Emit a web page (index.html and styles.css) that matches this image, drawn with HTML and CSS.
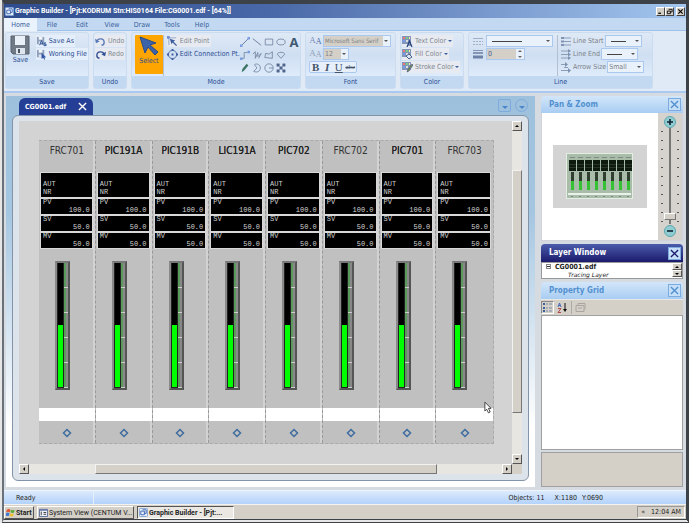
FILE: index.html
```
<!DOCTYPE html>
<html lang="en">
<head>
<meta charset="utf-8">
<title>Graphic Builder</title>
<link rel="stylesheet" href="styles.css">
</head>
<body>
<svg class="defs" aria-hidden="true">
  <symbol id="i-app" viewBox="0 0 10 10"><rect x=".5" y=".5" width="9" height="9" rx="1" fill="#e4eefb" stroke="#7da0d4"/><path d="M2 3.5h4v4H2zM4 2h4v4H6" fill="none" stroke="#3b62ae"/></symbol>
  <symbol id="i-close" viewBox="0 0 10 10"><path d="M1 1l8 8M9 1l-8 8" fill="none" stroke="currentColor" stroke-width="1.5"/></symbol>
  <symbol id="i-doc" viewBox="0 0 12 12"><path d="M1 1h8v8H1z" fill="#8fa0bb"/><path d="M3 1h4v3H3z" fill="#f4f7fb"/><path d="M3 6h4v3H3z" fill="#dfe6f0"/></symbol>
  <symbol id="i-grid" viewBox="0 0 11 11"><rect width="9" height="8" fill="#8195b8"/><path d="M1 1h2v2H1z" fill="#e77"/><path d="M4 1h2v2H4z" fill="#7c8"/><path d="M7 1h1v2H7z" fill="#fe9"/><path d="M1 4h2v2H1z" fill="#79e"/><path d="M4 4h2v2H4z" fill="#ddd"/></symbol>
</svg>
<div class="window">
  <header class="title">
    <svg class="ic9"><use href="#i-app"/></svg>
    <h1>Graphic Builder - [Pjt:KODRUM Stn:HIS0164 File:CG0001.edf - [64%]]</h1>
    <button aria-label="Minimize"><svg viewBox="0 0 8 8"><path d="M1.500 6h3" stroke="#000" stroke-width="1.500"/></svg></button>
    <button aria-label="Restore"><svg viewBox="0 0 8 8"><path d="M3 1.500h4v3H5M1.500 3.500h3.500v3H1.500z" fill="none" stroke="#000"/></svg></button>
    <button class="gap" aria-label="Close"><svg viewBox="0 0 8 8"><path d="M1.500 1.500l5 5M6.500 1.500l-5 5" stroke="#000" stroke-width="1.300"/></svg></button>
  </header>
  <nav class="tabs">
    <button class="on">Home</button><button>File</button><button>Edit</button><button>View</button><button>Draw</button><button>Tools</button><button>Help</button>
  </nav>
  <div class="ribbon">
    <section class="group g-save">
      <div class="body">
        <button class="big">
          <svg viewBox="0 0 20 20"><path d="M1 1h18v18H3l-2-2z" fill="#6f7a86" stroke="#56606c"/><path d="M5 1h10v9H5z" fill="#e9f0f8"/><path d="M6 13h9v6H6z" fill="#dfe5ec"/><path d="M8 14h2v4H8z" fill="#4b545e"/></svg>
          Save</button>
        <div class="rows">
          <button class="lite"><svg viewBox="0 0 12 12"><use href="#i-doc" width="12" height="12"/><path d="M4 10l2-5 2 5M5 8.500h2M11 7.500H9v1.500h2v1.500H8.500" fill="none" stroke="#24478f"/></svg>Save As</button>
          <button class="lite"><svg viewBox="0 0 12 12"><use href="#i-doc" width="12" height="12"/><path d="M6 4l5 5-2 .2 1 2-1 .5-1-2-2 1z" fill="#3355a5"/></svg>Working File</button>
        </div>
      </div>
      <h2>Save</h2>
    </section>
    <section class="group g-undo">
      <div class="body"><div class="rows">
        <button class="dim"><svg viewBox="0 0 12 12"><path d="M2 6c1-4 8-4 8 1 0 2-1 3-3 3" fill="none" stroke="#5b79b8" stroke-width="1.500"/><path d="M0 3l1 5 4-2z" fill="#5b79b8"/></svg>Undo</button>
        <button class="dim"><svg viewBox="0 0 12 12"><path d="M10 6C9 2 2 2 2 7c0 2 1 3 3 3" fill="none" stroke="#2f4f94" stroke-width="1.500"/><path d="M12 3l-1 5-4-2z" fill="#2f4f94"/></svg>Redo</button>
      </div></div>
      <h2>Undo</h2>
    </section>
    <section class="group g-mode">
      <div class="body">
        <button class="big select"><svg viewBox="0 0 20 20"><path d="M1 1l16 6-6 2 8 7-3 3-7-8-3 6z" fill="#3c62a8" stroke="#2a4a8a"/></svg>Select</button>
        <div class="rows">
          <button class="dim"><svg viewBox="0 0 12 12"><path d="M2 2v8M2 2h8" stroke="#8da4cf"/><path d="M3 3l6 2-2 1 4 4-1 1-4-4-1 2z" fill="#3c5ca0"/><path d="M0 0h3v3H0z" fill="#6f8fd0"/></svg>Edit Point</button>
          <button class="plain"><svg viewBox="0 0 12 12"><circle cx="6" cy="6" r="4.500" fill="none" stroke="#44639f"/><path d="M5 5h2v2H5zM5 0h2v2H5zM5 10h2v2H5zM0 5h2v2H0zM10 5h2v2h-2z" fill="#3a5aa0"/></svg>Edit Connection Pt.</button>
        </div>
        <div class="tools">
          <button aria-label="Line"><svg viewBox="0 0 12 12"><path d="M2 10l8-8" stroke="#5a6f96"/><path d="M0 9h3v3H0zM9 0h3v3H9z" fill="#7b9ce0"/></svg></button>
          <button aria-label="Straight line"><svg viewBox="0 0 12 12"><path d="M1 2l10 8" stroke="#5f7090"/></svg></button>
          <button aria-label="Rectangle"><svg viewBox="0 0 12 12"><path d="M1.500 2.500h9v7h-9z" class="o"/></svg></button>
          <button aria-label="Ellipse"><svg viewBox="0 0 12 12"><ellipse cx="6" cy="6" rx="5" ry="3.500" class="o"/></svg></button>
          <button class="letter">A</button>
          <button aria-label="Polyline"><svg viewBox="0 0 12 12"><path d="M2 10h3V3h4" class="o"/><path d="M0 9h3v3H0zM9 1h3v3H9z" fill="#7b9ce0"/></svg></button>
          <button aria-label="Freehand"><svg viewBox="0 0 12 12"><path d="M1 5l3-3v8l3-7v5l4-4-3 6" class="o"/></svg></button>
          <button aria-label="Polygon"><svg viewBox="0 0 12 12"><path d="M1 9l1-5 4 1 4-3v8z" class="o"/></svg></button>
          <button aria-label="Sector"><svg viewBox="0 0 12 12"><path d="M1.500 5c1-3 8-3 9 0L6 10z" class="o"/></svg></button>
          <span></span>
          <button aria-label="Pencil"><svg viewBox="0 0 12 12"><path d="M2 11l1-4 5-6 2 2-5 6z" fill="#3d7463"/></svg></button>
          <button aria-label="Arc"><svg viewBox="0 0 12 12"><path d="M3 2c3-2 7 0 7 4s-4 6-8 4l4-4z" class="o"/></svg></button>
          <button aria-label="Pie"><svg viewBox="0 0 12 12"><circle cx="6" cy="6" r="5" class="o"/><path d="M6 6h5" class="o"/></svg></button>
          <button aria-label="Marker"><svg viewBox="0 0 12 12"><path d="M1 1h3v3H1zM4.500 4.500h3v3h-3zM8 1h3v3H8zM1 8h3v3H1zM8 8h3v3H8zM4 4l4 4M8 4l-4 4" fill="#52668c" stroke="#52668c" stroke-width=".5"/></svg></button>
        </div>
      </div>
      <h2>Mode</h2>
    </section>
    <section class="group g-font">
      <div class="body"><div class="rows">
        <div class="row"><label class="aa" for="face">A<b>A</b></label><span class="sel face"><select id="face"><option>Microsoft Sans Serif</option></select></span></div>
        <div class="row"><label class="aa gray" for="size">A<b>A</b></label><span class="sel size"><select id="size"><option>12</option></select></span></div>
        <div class="biu"><button class="b">B</button><button class="i">I</button><button class="u">U</button><button class="s">abc</button></div>
      </div></div>
      <h2>Font</h2>
    </section>
    <section class="group g-color">
      <div class="body"><div class="rows">
        <button class="dim drop"><svg viewBox="0 0 11 11"><use href="#i-grid" width="11" height="11"/><path d="M5 11l2.500-6L10 11M6 9h3" fill="none" stroke="#233f7c" stroke-width="1.200"/></svg>Text Color</button>
        <button class="dim drop"><svg viewBox="0 0 11 11"><use href="#i-grid" width="11" height="11"/><path d="M4 7l3-2 3 3-3 2z" fill="#dfe6f2" stroke="#47618f"/></svg>Fill Color</button>
        <button class="dim drop"><svg viewBox="0 0 11 11"><use href="#i-grid" width="11" height="11"/><path d="M5 10l1-3 4-5 1 1-4 6z" fill="#7b8c60" stroke="#43536f" stroke-width=".6"/></svg>Stroke Color</button>
      </div></div>
      <h2>Color</h2>
    </section>
    <section class="group g-line">
      <div class="body">
        <div class="rows">
          <div class="row"><svg viewBox="0 0 11 11"><path d="M0 2.500h10" stroke="#9fb0c8"/><path d="M0 5.500h10M0 8.500h10" stroke="#9fb0c8" stroke-dasharray="2 1"/></svg><span class="sel style stroke"><select aria-label="Line style"></select></span></div>
          <div class="row"><svg viewBox="0 0 11 11"><path d="M0 1.500h10" stroke="#8496b4"/><path d="M0 4h10" stroke="#8496b4" stroke-width="2"/><path d="M0 8h10" stroke="#6d82a6" stroke-width="3"/></svg><span class="spin"><input aria-label="Line width" value="0"><i></i></span></div>
        </div>
        <div class="rows ends">
          <div class="row"><svg viewBox="0 0 11 11"><path d="M1 2h9M1 5.500h9M1 9h9" stroke="#8c9db8"/><path d="M0 1h3v2H0zM0 4.500h3v2H0zM0 8h3v2H0z" fill="#8093b2"/></svg><label for="ls">Line Start</label><span class="sel end stroke"><select id="ls"></select></span></div>
          <div class="row"><svg viewBox="0 0 11 11"><path d="M0 2h9M0 5.500h9M0 9h9" stroke="#8c9db8"/><path d="M7 0l3 2-3 2zM7 3.500l3 2-3 2zM7 7l3 2-3 2z" fill="#8093b2"/></svg><label for="le">Line End</label><span class="sel end stroke"><select id="le"></select></span></div>
          <div class="row"><svg viewBox="0 0 11 11"><path d="M0 2.500h5M0 8.500h8M3 5.500h4" stroke="#8c9db8"/><path d="M4 0l3 2.500L4 5zM7 6l3 2.500L7 11z" fill="#8093b2"/></svg><label for="as">Arrow Size</label><span class="sel end"><select id="as"><option>Small</option></select></span></div>
        </div>
      </div>
      <h2>Line</h2>
    </section>
  </div>
  <main class="work">
    <section class="mdi">
      <div class="doctabs">
        <button class="doctab">CG0001.edf <svg><use href="#i-close"/></svg></button>
        <button class="nav" aria-label="Window list"></button>
        <button class="nav round" aria-label="Next window"></button>
      </div>
      <div class="doc">
        <div class="canvas"><div class="page" id="page"></div></div>
        <div class="vbar"><button class="arrow up" aria-label="Up"></button><div class="thumb"></div><button class="arrow down" aria-label="Down"></button></div>
        <div class="hbar"><button class="arrow left" aria-label="Left"></button><div class="thumb"></div><button class="arrow right" aria-label="Right"></button></div>
        <div class="corner"></div>
        <svg class="cursor" viewBox="0 0 9 14"><path d="M1 1v10l2-2 2 4 2-1-2-4h3z" fill="#fff" stroke="#333"/></svg>
      </div>
    </section>
    <aside class="side">
      <section class="panel">
        <h3>Pan &amp; Zoom<button aria-label="Close"><svg><use href="#i-close"/></svg></button></h3>
        <div class="pan">
          <div class="view"><svg class="mini" id="mini" viewBox="0 0 94 63"></svg></div>
          <div class="zoom">
            <button class="ball" aria-label="Zoom in"><svg viewBox="0 0 12 12"><circle cx="6" cy="6" r="5.500" fill="#8fcdd2" stroke="#5ea5ad"/><path d="M6 3v6M3 6h6" stroke="#123" stroke-width="1.600"/></svg></button>
            <div class="track"><input type="range" min="0" max="100" value="4" aria-label="Zoom"></div>
            <button class="ball" aria-label="Zoom out"><svg viewBox="0 0 12 12"><circle cx="6" cy="6" r="5.500" fill="#8fcdd2" stroke="#5ea5ad"/><path d="M3 6h6" stroke="#123" stroke-width="1.600"/></svg></button>
          </div>
        </div>
      </section>
      <section class="panel active">
        <h3>Layer Window<button aria-label="Close"><svg><use href="#i-close"/></svg></button></h3>
        <div class="layers">
          <ul><li><span class="minus"></span>CG0001.edf<ul><li>Tracing Layer</li></ul></li></ul>
          <div class="updown"><button class="arrow up" aria-label="Up"></button><button class="arrow down" aria-label="Down"></button></div>
        </div>
      </section>
      <section class="panel grow">
        <h3>Property Grid<button aria-label="Close"><svg><use href="#i-close"/></svg></button></h3>
        <div class="pbar">
          <button class="on" aria-label="Categorized"><svg viewBox="0 0 11 11"><path d="M1 1h2v2H1zM1 5h2v2H1zM1 8h2v2H1z" fill="#3c5fa0"/><path d="M4 2h2M7 2h3M4 6h2M7 6h3M4 9h2M7 9h3" stroke="#7a8ba8"/></svg></button>
          <button class="az" aria-label="Alphabetical"><svg viewBox="0 0 11 11"><path d="M1 5l1.500-4L4 5M1.500 3.500h2" fill="none" stroke="#4668b8"/><path d="M1 6.500h3l-3 4h3" fill="none" stroke="#b0484c"/><path d="M8 1v7" stroke="#111"/><path d="M6 7h4L8 10z" fill="#111"/></svg></button>
          <button class="pp" aria-label="Property pages"><svg viewBox="0 0 11 11"><path d="M1 3.500h8v6H1zM3 3V1.500h7v6" fill="none" stroke="#aaa69f"/><path d="M3 6h4" stroke="#aaa69f"/></svg></button>
        </div>
        <div class="pgrid"></div>
        <div class="pdesc"></div>
      </section>
    </aside>
  </main>
  <footer class="status"><span class="ready">Ready</span><span class="obj">Objects: 11</span><span class="xy">X:1180</span><span class="y">Y:0690</span></footer>
  <div class="taskbar">
    <button class="start"><svg viewBox="0 0 10 10"><path d="M1 2q2-2 4 0L4 5Q2.500 3.500 0 5z" fill="#e2562e"/><path d="M5.500 2q2 1 4 0L9 5q-2 1-4 0z" fill="#5cab3c"/><path d="M0 6q2-2 4 0L3 9Q1.500 8 0 9z" fill="#3a76d2"/><path d="M4.500 6q2 1 4 0L8 9q-2 1-4 0z" fill="#eebf2c"/></svg>Start</button>
    <button class="task"><svg viewBox="0 0 10 10"><path d="M.5 1.500h9v8h-9z" fill="#eef1f8" stroke="#51659a"/><path d="M1 2.500h8" stroke="#51659a"/><path d="M2.500 4v4M5 5h3M5 7h3" stroke="#333"/></svg>System View (CENTUM V...</button>
    <button class="task on"><svg><use href="#i-app"/></svg>Graphic Builder - [Pjt:...</button>
    <div class="tray"><span>«</span><time>12:04 AM</time></div>
  </div>
</div>
<script src="app.js"></script>
</body>
</html>
```
FILE: styles.css
```
* { box-sizing: border-box; }
body { margin: 0; background: #e6e6e6; font: 7px/10px "DejaVu Sans Condensed", "DejaVu Sans", sans-serif; color: #222; }
button, select, input { font: inherit; color: inherit; margin: 0; padding: 0; border: 0; border-radius: 0; background: none; }
h1, h2, h3 { margin: 0; font-size: inherit; }
ul { list-style: none; margin: 0; padding: 0; }
svg { display: block; flex: none; }
.defs { position: absolute; width: 0; height: 0; }
.window { min-height: 100vh; margin-left: 2px; border: solid #3d4148; border-width: 4px 3px 4px 2px; border-left-color: #6b7178; border-bottom-style: double; display: flex; flex-direction: column; }

.title { height: 14px; display: flex; align-items: center; padding: 0 1px; background: linear-gradient(90deg, #2f4d8e, #4a69a8 40%, #a3c6ef); color: #fff; }
.title .ic9 { width: 9px; height: 9px; }
.title h1 { flex: 1; font: bold 7px/10px Roboto, sans-serif; padding-left: 1px; white-space: nowrap; }
.title button { width: 9px; height: 9px; background: #d4d0c8; border: 1px solid; border-color: #fff #444 #444 #fff; }
.title button svg { width: 7px; height: 7px; }
.title .gap { margin-left: 2px; }

.tabs { height: 13px; display: flex; background: #c2d9f1; color: #3a5f9c; border-bottom: 1px solid #9dc1e8; }
.tabs button { width: 30px; height: 13px; }
.tabs .on { width: 33px; background: #eaf2fc; }

.ribbon { display: flex; gap: 4px; padding: 1px 1px 2px; background: #e0e9f6; border-bottom: 2px solid #a9c9f0; color: #2d4d92; }
.group { border: 1px solid #cbdcf0; border-radius: 3px; background: linear-gradient(#dfe9f6, #cfdff2 40%, #e6f2ff); }
.group .body { height: 43px; padding-top: 2px; display: flex; }
.group h2 { height: 12px; line-height: 12px; text-align: center; font-weight: normal; background: #c2d9f1; }
.g-save { width: 84px; } .g-undo { width: 34px; } .g-mode { width: 170px; } .g-font { width: 91px; } .g-color { width: 64px; } .g-line { width: 185px; }
.rows { display: flex; flex-direction: column; gap: 1px; align-items: flex-start; }
.rows > * { height: 12px; display: flex; align-items: center; gap: 2px; white-space: nowrap; }
.rows svg { width: 11px; height: 11px; }
.big { width: 29px; height: 30px; display: flex; flex-direction: column; align-items: center; gap: 0; }
.big svg { width: 20px; height: 20px; }
.big.select { width: 28px; height: 39px; background: #ffa500; margin-left: 3px; padding-top: 1px; border-radius: 1px; }
.big + .rows { padding-left: 1px; }
.lite { background: #e5effb; padding-right: 1px; }
.dim { background: #e7ebf1; color: #83878f; padding-right: 1px; }
.g-undo .rows, .g-color .rows { padding-left: 1px; }
.g-mode .rows { border-left: 1px solid #b4c0cf; width: 78px; padding-left: 3px; }
.tools { display: grid; grid-template-columns: repeat(5, 12px); grid-auto-rows: 13px; }
.tools svg { width: 10px; height: 10px; }
.tools .o { fill: none; stroke: #71839f; }
.tools .letter { font: bold 13px/12px "Open Sans", sans-serif; color: #3d5870; }
.g-font .rows { padding-left: 3px; }
.aa { width: 13px; font: 9px/12px "Liberation Serif", serif; color: #7c90b8; text-align: center; }
.aa b { font-weight: normal; font-size: 8px; vertical-align: -1px; color: #4e68a8; }
.gray b, .gray { color: #93a0b6; }
.row { gap: 1px; }
.sel { position: relative; display: block; height: 12px; border: 1px solid #abc8ee; background: #e9f1fb; color: #7d7f84; }
.sel select { display: block; width: 100%; height: 10px; appearance: none; padding-left: 1px; outline: 0; }
.sel::after { content: ""; position: absolute; right: 2px; top: 4px; border: 2px solid transparent; border-top-color: #555; }
.stroke::before { content: ""; position: absolute; left: 5px; top: 5px; width: 15px; height: 1px; background: #444; }
.face { width: 68px; } .size { width: 26px; } .style { width: 67px; } .style::before { width: 30px; } .end { width: 37px; }
.face select, .size select { background: #d4d0c8; width: calc(100% - 7px); }
.face select { font-size: 6px; }
.biu { width: 48px; border: 1px solid #abc8ee; border-radius: 2px; font: 11px/10px "Liberation Serif", serif; color: #44536a; background: #e6effa; }
.rows .biu { gap: 0; }
.biu button { flex: 1; }
.b { font-weight: bold; } .i { font-style: italic; font-weight: bold; } .u { text-decoration: underline; } .biu .s { font-size: 7px; text-decoration: line-through; }
.drop::after { content: ""; border: 2px solid transparent; border-top-color: #3a5f9c; border-bottom: 0; }
.g-line .body { gap: 4px; padding-left: 4px; color: #7d8188; }
.g-line .row { gap: 2px; }
.ends { border-left: 1px solid #b4c0cf; padding-left: 3px; }
.g-line .ends .row { gap: 1px; }
.spin { width: 39px; border: 1px solid #abc8ee; display: flex; background: #e9f1fb; }
.spin input { width: 29px; height: 10px; background: #d4d0c8; padding-left: 1px; color: #4a5f8c; }
.spin i { position: relative; flex: 1; }
.spin i::before, .spin i::after { content: ""; position: absolute; left: 2px; border: 2px solid transparent; }
.spin i::before { top: 1px; border-top: 0; border-bottom-color: #666; }
.spin i::after { bottom: 1px; border-bottom: 0; border-top-color: #666; }

.work { flex: 1; display: flex; gap: 6px; padding: 3px 3px 3px 2px; background: #d6dbe2; }
.mdi { flex: 1; display: flex; flex-direction: column; padding: 0 6px 6px; background: linear-gradient(#9dc0dc, #a5c6e1 30%, #fff 85%); }
.doctabs { height: 19px; display: flex; align-items: flex-end; gap: 4px; padding: 0 1px 0 7px; }
.doctab { height: 17px; width: 74px; margin-right: auto; border-radius: 6px 6px 0 0; background: #263f96; color: #fff; font-weight: bold; display: flex; align-items: center; justify-content: space-between; padding: 0 6px; white-space: nowrap; }
.doctab svg { width: 9px; height: 9px; }
.nav { width: 13px; height: 13px; margin-bottom: 3px; border: 1px solid #7eabdd; border-radius: 2px; display: grid; place-items: center; }
.nav.round { border-radius: 50%; }
.nav::after { content: ""; border: 3px solid transparent; border-top-color: #4a86cc; border-bottom: 0; margin-top: 3px; }
.doc { position: relative; flex: 1; border: 1px solid #8494a8; border-radius: 6px; background: #dde3ea; padding: 5px 6px 6px; display: grid; grid-template: 1fr 10px / 1fr 10px; }
.canvas { background: #d3d3d3; padding: 19px 18px 20px 20px; display: flex; }
.page { flex: 1; display: grid; grid-template-columns: repeat(8, 1fr); border: 1px dashed #aaa; border-left: 0; background: #c0c0c0; }
.unit { border-right: 1px dashed #999; box-shadow: inset -2px 0 #d2d2d2; display: flex; flex-direction: column; }
.unit:last-child { border: 0; box-shadow: none; }
.tag { height: 31px; padding-top: 3px; text-align: center; font-size: 10px; line-height: 13px; color: #333; }
.tag.strong { text-shadow: 0 0 #222; color: #222; }
.lcd { margin: 0 2px 0 1px; border: 1px solid #d8d8d8; display: grid; gap: 2px; background: #d8d8d8; font: 7px/8px "Liberation Mono", monospace; color: #d2d2d2; }
.lcd > div { background: #000; height: 15px; padding: 0 2px; }
.lcd > .mode { height: 24px; padding-top: 7px; }
.lcd span { display: block; line-height: 7px; }
.lcd b { display: block; text-align: right; font-weight: normal; line-height: 8px; }
.gauge { width: 15px; height: 129px; margin: 12px 0 0 16px; background: #c0c0c0; border: 2px solid; border-color: #777 #555 #555 #8a8a8a; display: flex; }
.tube { width: 7px; background: #000; border: 1px solid #222; border-top: 0; display: flex; align-items: flex-end; }
.level { width: 100%; background: #0f0; }
.scale { flex: 1; background: repeating-linear-gradient(transparent 0 24px, #ccc 24px 25px), linear-gradient(90deg, #5a9a5a 0 2px, #888 2px); }
.strip { margin-top: auto; height: 13px; background: #fff; }
.foot { height: 22px; display: grid; place-items: center; }
.foot svg { width: 10px; height: 10px; margin-top: 2px; }
.vbar, .hbar { background: #e8e6e1; display: flex; }
.vbar { flex-direction: column; }
.thumb, .corner { background: #d4d0c8; }
.thumb { border: 1px solid; border-color: #f2f2f2 #777 #777 #f2f2f2; flex: 1; }
.vbar .thumb { margin: 39px 0 41px; }
.hbar .thumb { margin: 0 65px 0 66px; }
.arrow { width: 10px; height: 10px; flex: none; background: #d4d0c8; border: 1px solid; border-color: #fff #555 #555 #fff; display: grid; place-items: center; }
.arrow::after { content: ""; border: 2px solid transparent; }
.up::after { border-bottom-color: #000; border-top: 0; }
.down::after { border-top-color: #000; border-bottom: 0; }
.left::after { border-right-color: #000; border-left: 0; }
.right::after { border-left-color: #000; border-right: 0; }
.cursor { position: absolute; right: 36px; bottom: 66px; width: 8px; height: 13px; }

.side { width: 142px; display: flex; flex-direction: column; gap: 3px; }
.panel { display: flex; flex-direction: column; }
.panel h3 { height: 17px; display: flex; align-items: center; justify-content: space-between; padding: 0 2px 0 8px; border-radius: 4px 4px 0 0; font-size: 8px; background: linear-gradient(#d3e6fa, #a8cdf2); color: #5290d0; }
.panel h3 button { width: 13px; height: 13px; padding: 1px; border: 1px solid #7eabdd; background: #c5dff8; }
.panel h3 svg { width: 9px; height: 9px; }
.active h3 { height: 18px; background: linear-gradient(#4a5cab, #1c1a6c); color: #fff; }
.active h3 button { color: #1c1a6c; }
.pan { height: 128px; display: flex; border: 1px solid #d0d4da; border-top: 0; }
.view { flex: 1; background: #fff; display: grid; place-items: center; }
.mini { width: 94px; height: 63px; }
.zoom { width: 24px; background: #d6d3ce; display: flex; flex-direction: column; align-items: center; padding: 3px 0; }
.ball, .ball svg { width: 12px; height: 12px; }
.track { flex: 1; width: 18px; display: flex; justify-content: center; background: repeating-linear-gradient(transparent 0 3px, #555 3px 4px, transparent 4px 9px) 0 0 / 2px 100% no-repeat, repeating-linear-gradient(transparent 0 3px, #555 3px 4px, transparent 4px 9px) 100% 0 / 2px 100% no-repeat; }
.track input { writing-mode: vertical-lr; direction: rtl; appearance: none; width: 12px; height: 96px; background: linear-gradient(#777, #777) 50% 0 / 2px 100% no-repeat; }
.track input::-webkit-slider-thumb { appearance: none; width: 12px; height: 7px; background: #d4d0c8; border: 1px solid; border-color: #fff #777 #777 #fff; }
.layers { height: 17px; border: 1px solid #999; background: #fff; display: flex; font-weight: bold; line-height: 8px; }
.layers > ul { flex: 1; padding-left: 4px; }
.layers ul ul { padding-left: 22px; font: italic 6px/7px "DejaVu Sans", sans-serif; }
.minus { display: inline-block; width: 5px; height: 5px; margin-right: 4px; border: 1px solid #888; background: linear-gradient(#333, #333) 50% 50% / 3px 1px no-repeat; }
.updown .arrow { height: 7px; }
.grow { flex: 1; }
.pbar { height: 16px; display: flex; align-items: center; gap: 2px; background: #d4d0c8; border-top: 1px solid #e8e8e8; }
.pbar button { width: 13px; height: 13px; padding: 1px; }
.pbar svg { width: 11px; height: 11px; }
.pbar .on { border: 1px solid; border-color: #888 #fff #fff #888; padding: 0; }
.pbar .pp { border-left: 1px solid #aaa; width: 17px; padding-left: 3px; }
.pgrid { flex: 1; background: #fff; border: 1px solid #a0a0a0; }
.pdesc { height: 35px; margin-top: 2px; background: #d4d0c8; border: 1px solid #a0a0a0; }

.status { height: 14px; line-height: 14px; display: flex; background: linear-gradient(#dceafc, #b3d2fb); border-top: 1px solid #eef4fd; padding: 0 83px 0 12px; }
.ready { width: 78px; border-right: 1px solid #e6f0fd; }
.obj { margin-left: auto; } .xy { margin-left: 10px; } .y { margin-left: 5px; }
.taskbar { height: 15px; display: flex; gap: 3px; padding: 1px 1px 1px 0; background: #d4d0c8; border-top: 1px solid #f3f2ef; }
.taskbar button { display: flex; align-items: center; gap: 1px; height: 13px; border: 1px solid; border-color: #fff #555 #555 #fff; padding: 0 1px; white-space: nowrap; font-family: Roboto, sans-serif; }
.taskbar svg { width: 9px; height: 9px; }
.taskbar .start { width: 30px; font-weight: bold; }
.task { width: 97px; }
.taskbar .on { border-color: #555 #fff #fff #555; background: #ebe8e3; font-weight: bold; }
.tray { margin-left: auto; border: 1px solid; border-color: #999 #fff #fff #999; padding: 0 3px; display: flex; gap: 6px; align-items: center; }
```
FILE: app.js
```
const tags = ["FRC701", "PIC191A", "PIC191B", "LIC191A", "PIC702", "FRC702", "PIC701", "FRC703"];
const reading = (name, value) => `<div><span>${name}</span><b>${value}</b></div>`;

document.getElementById("page").innerHTML = tags.map(tag => `
  <div class="unit">
    <div class="tag ${tag.startsWith("FRC") ? "" : "strong"}">${tag}</div>
    <div class="lcd"><div class="mode">AUT<br>NR</div>${reading("PV", "100.0")}${reading("SV", "50.0")}${reading("MV", "50.0")}</div>
    <div class="gauge"><div class="tube"><div class="level" style="height:50%"></div></div><div class="scale"></div></div>
    <div class="strip"></div>
    <div class="foot"><svg viewBox="0 0 10 10"><path d="M5 1.500L8.500 5 5 8.500 1.500 5z" fill="none" stroke="#3f6c9e" stroke-width="1.500"/></svg></div>
  </div>`).join("");

// Overview of the page shown in the pan panel
document.getElementById("mini").innerHTML =
  `<rect width="94" height="63" fill="#d3d3d3"/><rect x="13.500" y="8.500" width="66" height="45" fill="#a9bba9" stroke="#e4efe4"/>
   <rect x="15" y="48" width="63" height="2" fill="#e8f2e8"/>` +
  tags.map((tag, i) => {
    const x = 16 + i * 8;
    return `<path d="M${x + 1} 12.500h5M${x + 2} 51.500h2" stroke="#7d8d7d"/><rect x="${x}" y="15" width="7" height="11" fill="#0d1a0d"/>
      <path d="M${x} 19.500h7M${x} 22.500h7" stroke="#405040" stroke-width=".5"/>
      <rect x="${x + 2}" y="27" width="3" height="9" fill="#304030"/><rect x="${x + 2}" y="36" width="3" height="9" fill="#34c234"/>`;
  }).join("");
```
